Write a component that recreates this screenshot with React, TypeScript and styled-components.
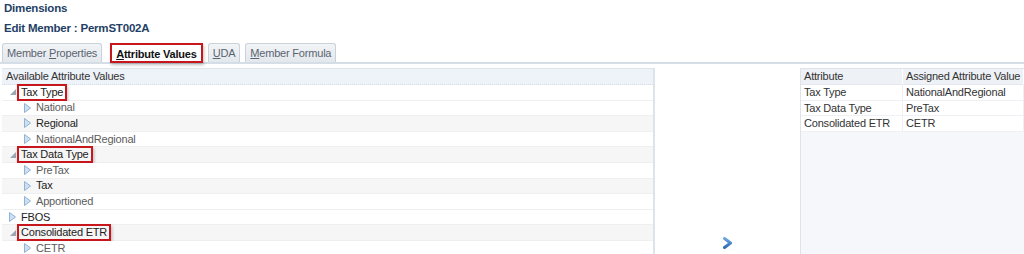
import React from "react";
import styled, { createGlobalStyle } from "styled-components";

const GlobalStyle = createGlobalStyle`
    html, body {
        margin: 0;
        padding: 0;
        background: #ffffff;
    }
    body {
        width: 1024px;
        height: 254px;
        overflow: hidden;
        font-family: Tahoma, "Liberation Sans", Arial, sans-serif;
        font-size: 11px;
        letter-spacing: -0.2px;
        color: #333333;
    }
`;

interface TreeNode {
    label: string;
    level: number;
    expanded?: boolean;
    boxed?: boolean;
    dark?: boolean;
    striped?: boolean;
}

const nodes: TreeNode[] = [
    { label: "Tax Type", level: 0, expanded: true, boxed: true, dark: true },
    { label: "National", level: 1 },
    { label: "Regional", level: 1, dark: true, striped: true },
    { label: "NationalAndRegional", level: 1 },
    { label: "Tax Data Type", level: 0, expanded: true, boxed: true, dark: true, striped: true },
    { label: "PreTax", level: 1 },
    { label: "Tax", level: 1, dark: true, striped: true },
    { label: "Apportioned", level: 1 },
    { label: "FBOS", level: 0, dark: true },
    { label: "Consolidated ETR", level: 0, expanded: true, boxed: true, dark: true, striped: true },
    { label: "CETR", level: 1 },
];

const assigned = [
    ["Tax Type", "NationalAndRegional"],
    ["Tax Data Type", "PreTax"],
    ["Consolidated ETR", "CETR"],
];

const tabs = [
    { key: "P", before: "Member ", after: "roperties" },
    { key: "A", before: "", after: "ttribute Values", active: true },
    { key: "U", before: "", after: "DA" },
    { key: "M", before: "", after: "ember Formula" },
];

const ExpandedIcon = () => (
    <svg width="6" height="6" viewBox="0 0 6 6">
        <polygon points="6,0 6,6 0,6" fill="#9aa6b2" />
    </svg>
);

const CollapsedIcon = () => (
    <svg width="7" height="10" viewBox="0 0 7 10">
        <polygon points="0.5,0.5 6.5,5 0.5,9.5" fill="#cfe0f0" stroke="#8fb2d6" strokeWidth="1" />
    </svg>
);

const MoveIcon = () => (
    <svg width="10" height="12" viewBox="0 0 10 12">
        <defs>
            <linearGradient id="mv" x1="0" y1="0" x2="0" y2="1">
                <stop offset="0" stopColor="#6fa6e0" />
                <stop offset="1" stopColor="#2f6db5" />
            </linearGradient>
        </defs>
        <path d="M1.5 1.5 L7.5 6 L1.5 10.5" fill="none" stroke="url(#mv)" strokeWidth="3" strokeLinejoin="round" strokeLinecap="round" />
    </svg>
);

const App: React.FunctionComponent = () => (
    <Page>
        <GlobalStyle />
        <Title>Dimensions</Title>
        <SubTitle>Edit Member : PermST002A</SubTitle>
        <TabBar>
            {tabs.map(t => (
                <Tab key={t.key} active={!!t.active}>
                    {t.before}
                    <u>{t.key}</u>
                    {t.after}
                </Tab>
            ))}
        </TabBar>
        <Content>
            <TreePanel>
                <PanelHeader>Available Attribute Values</PanelHeader>
                {nodes.map(n => (
                    <TreeRow key={n.label} striped={!!n.striped} level={n.level}>
                        <Toggle>{n.expanded ? <ExpandedIcon /> : <CollapsedIcon />}</Toggle>
                        <NodeLabel dark={!!n.dark} boxed={!!n.boxed}>
                            {n.label}
                        </NodeLabel>
                    </TreeRow>
                ))}
            </TreePanel>
            <Shuttle>
                <MoveIcon />
            </Shuttle>
            <AssignedPanel>
                <Grid>
                    <HeadCell>Attribute</HeadCell>
                    <HeadCell>Assigned Attribute Value</HeadCell>
                    {assigned.map(([a, v]) => (
                        <React.Fragment key={a}>
                            <Cell>{a}</Cell>
                            <Cell>{v}</Cell>
                        </React.Fragment>
                    ))}
                </Grid>
            </AssignedPanel>
        </Content>
    </Page>
);

export default App;

const Page = styled.div`
    width: 1024px;
    height: 254px;
    display: flex;
    flex-direction: column;
    overflow: hidden;
`;

const Title = styled.div`
    font-weight: 700;
    font-size: 11.5px;
    color: #1f3f66;
    padding: 1px 4px 0;
    height: 17px;
    line-height: 15px;
`;

const SubTitle = styled.div`
    font-weight: 700;
    font-size: 11.5px;
    color: #1f3f66;
    padding: 0 4px;
    height: 23px;
    line-height: 20px;
`;

const TabBar = styled.div`
    display: flex;
    align-items: flex-end;
    gap: 5px;
    padding-left: 2px;
    height: 21px;
    border-bottom: 2px solid #d5dde6;
`;

const Tab = styled.div<{ active: boolean }>`
    line-height: 18px;
    padding: 0 4px;
    box-sizing: border-box;
    border: ${({ active }) => (active ? "2px solid #c8161d" : "1px solid #c9d1da")};
    border-bottom: ${({ active }) => (active ? "2px solid #c8161d" : "none")};
    border-radius: ${({ active }) => (active ? "0" : "3px 3px 0 0")};
    background: ${({ active }) => (active ? "#ffffff" : "linear-gradient(#f2f4f6, #e3e8ed)")};
    color: ${({ active }) => (active ? "#111111" : "#5a6470")};
    font-weight: ${({ active }) => (active ? 700 : 400)};
    box-shadow: ${({ active }) => (active ? "1px 2px 3px rgba(0, 0, 0, 0.25)" : "none")};
    margin-left: ${({ active }) => (active ? "3px" : "0")};
    margin-bottom: ${({ active }) => (active ? "-1px" : "0")};
    height: ${({ active }) => (active ? "20px" : "19px")};
    white-space: nowrap;
`;

const Content = styled.div`
    display: flex;
    flex: 1;
    padding-top: 4px;
    min-height: 0;
`;

const TreePanel = styled.div`
    width: 651px;
    margin-left: 2px;
    border-top: 1px solid #dde3ea;
    border-right: 2px solid #dde3ea;
    display: flex;
    flex-direction: column;
`;

const PanelHeader = styled.div`
    height: 15px;
    line-height: 15px;
    padding-left: 4px;
    background: #eef2f9;
    border-bottom: 1px dotted #d7dde6;
    color: #333333;
`;

const TreeRow = styled.div<{ striped: boolean; level: number }>`
    display: flex;
    align-items: center;
    height: 15.6px;
    flex-shrink: 0;
    box-sizing: border-box;
    padding-left: ${({ level }) => 6 + level * 15}px;
    background: ${({ striped }) => (striped ? "#f6f6f6" : "#ffffff")};
    border-bottom: 1px solid #efefef;
`;

const Toggle = styled.span`
    display: inline-flex;
    align-items: center;
    justify-content: center;
    width: 9px;
    height: 10px;
    margin-right: 3px;
`;

const NodeLabel = styled.span<{ dark: boolean; boxed: boolean }>`
    color: ${({ dark }) => (dark ? "#222222" : "#5c5c5c")};
    line-height: 13px;
    padding: 0 2px;
    border: 2px solid ${({ boxed }) => (boxed ? "#c8161d" : "transparent")};
    box-shadow: ${({ boxed }) => (boxed ? "1px 2px 3px rgba(0, 0, 0, 0.25)" : "none")};
    margin-left: -3px;
    white-space: nowrap;
`;

const Shuttle = styled.div`
    width: 145px;
    display: flex;
    justify-content: center;
    align-items: flex-end;
    padding-bottom: 5px;
`;

const AssignedPanel = styled.div`
    flex: 1;
    border-left: 1px solid #dde3ea;
    border-top: 1px solid #dde3ea;
    background: #f5f7fb;
`;

const Grid = styled.div`
    display: grid;
    grid-template-columns: 102px 1fr;
`;

const HeadCell = styled.div`
    height: 15px;
    line-height: 15px;
    padding-left: 3px;
    background: #eef1f6;
    border-right: 1px solid #ffffff;
    border-bottom: 1px solid #e3e7ee;
    color: #333333;
    white-space: nowrap;
`;

const Cell = styled.div`
    height: 15.6px;
    line-height: 15px;
    padding-left: 3px;
    background: #ffffff;
    border-right: 1px solid #eef0f3;
    border-bottom: 1px solid #eef0f3;
    box-sizing: border-box;
    color: #333333;
    white-space: nowrap;
`;
